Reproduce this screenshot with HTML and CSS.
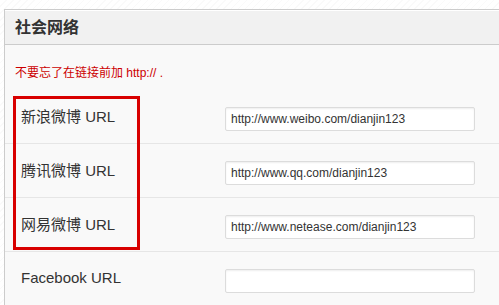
FILE: index.html
```html
<!DOCTYPE html>
<html lang="zh-CN">
<head>
    <meta charset="UTF-8">
    <meta name="viewport" content="width=device-width, initial-scale=1.0">
    <title>社会网络</title>
    <link rel="stylesheet" href="styles.css">
</head>
<body>
    <div class="wrap">
        <div class="panel">
            <h3 class="panel-title">社会网络</h3>
            <div class="panel-body">
                <p class="notice">不要忘了在链接前加 http:// .</p>

                <div class="form-table">
                    <div class="row">
                        <label for="sina">新浪微博 URL</label>
                        <input type="text" id="sina" value="http://www.weibo.com/dianjin123">
                    </div>
                    <div class="row">
                        <label for="tencent">腾讯微博 URL</label>
                        <input type="text" id="tencent" value="http://www.qq.com/dianjin123">
                    </div>
                    <div class="row">
                        <label for="netease">网易微博 URL</label>
                        <input type="text" id="netease" value="http://www.netease.com/dianjin123">
                    </div>
                    <div class="row">
                        <label for="facebook">Facebook URL</label>
                        <input type="text" id="facebook" value="">
                    </div>

                    <!-- red annotation box drawn over the labels -->
                    <div class="highlight"></div>
                </div>
            </div>
        </div>
    </div>
</body>
</html>
```

FILE: styles.css
```css
body {
    margin: 0;
    font-family: "Liberation Sans", Arial, "Noto Sans CJK SC", sans-serif;
    color: #333;
    background-color: #fff;
    background-image: repeating-linear-gradient(135deg, #fff 0, #fff 4px, #fafafa 4px, #fafafa 5px);
}
.wrap {
    padding: 9px 0 0 4px;
}
.panel {
    border: 1px solid #ccc;
    border-right: none;
    border-bottom: none;
    background: #f9f9f9;
}
.panel-title {
    margin: 0;
    height: 33px;
    line-height: 33px;
    padding-left: 10px;
    font-size: 16px;
    font-weight: bold;
    color: #333;
    background: #f1f1f1;
    border-top: 1px solid #fff;
    border-bottom: 1px solid #ccc;
}
.panel-body {
    padding-top: 19px;
}
.notice {
    margin: 0 0 8px 10px;
    line-height: 18px;
    font-size: 12px;
    color: #cc0000;
}
.form-table {
    position: relative;
}
.row {
    display: flex;
    align-items: center;
    height: 53px;
    border-bottom: 1px solid #e6e6e6;
}
.row:last-of-type {
    height: 54px;
    border-bottom: none;
}
.row label {
    width: 204px;
    padding-left: 16px;
    padding-bottom: 3px;
    font-size: 15px;
    color: #333;
}
.row input {
    width: 250px;
    height: 24px;
    margin-top: 4px;
    padding: 0 5px;
    box-sizing: border-box;
    border: 1px solid #dcdcdc;
    border-radius: 2px;
    box-shadow: inset 0 1px 2px rgba(0, 0, 0, 0.07);
    background: #fff;
    font-family: "Liberation Sans", Arial, sans-serif;
    font-size: 12px;
    color: #333;
    outline: none;
}
.highlight {
    position: absolute;
    left: 8px;
    top: 6px;
    width: 121px;
    height: 148px;
    border: 3px solid #d80000;
}
```
